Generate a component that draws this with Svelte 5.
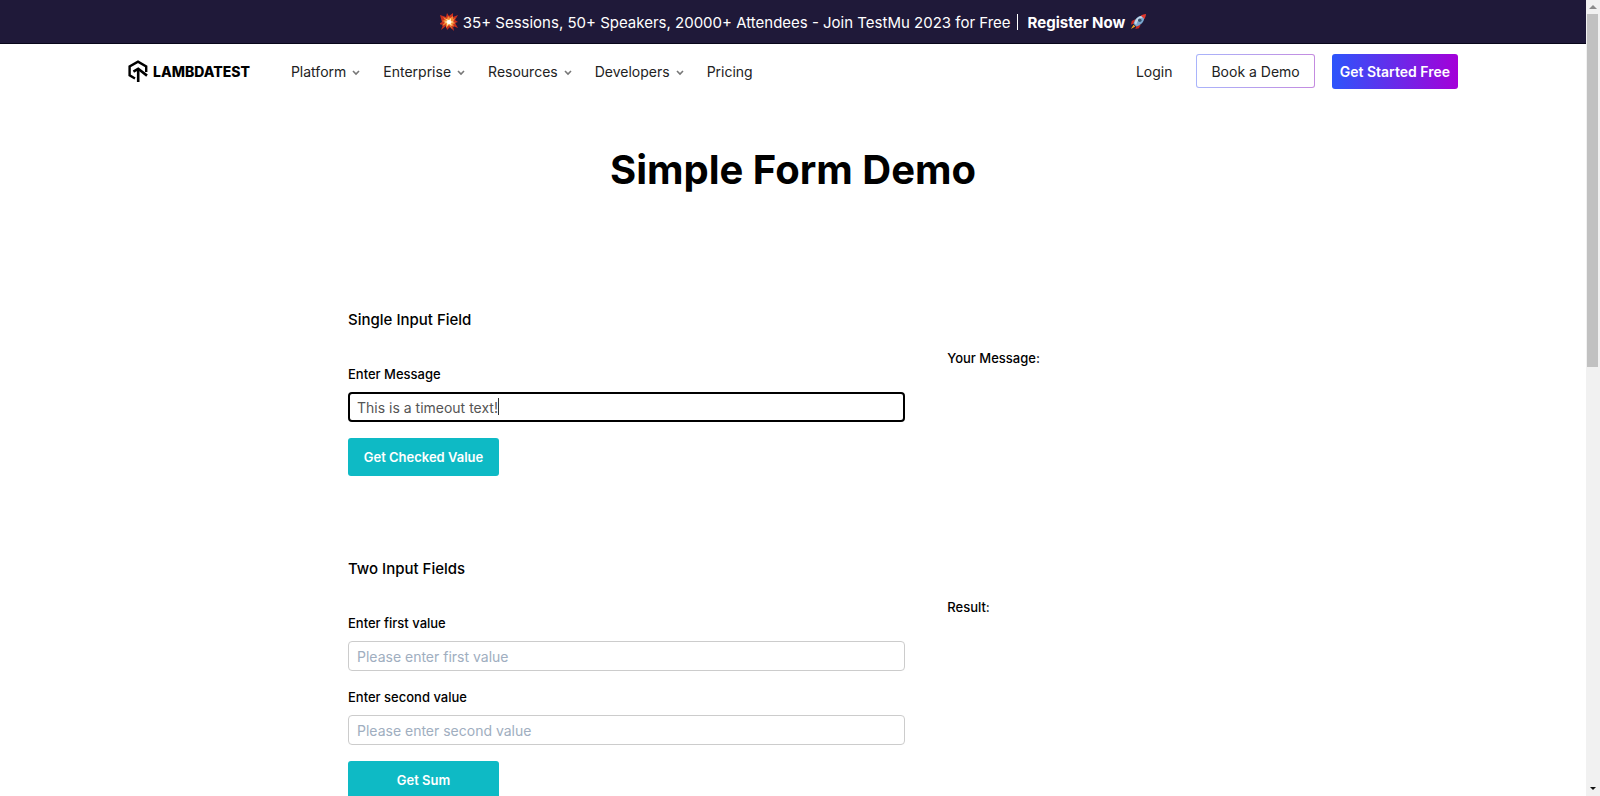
<script>
	const links = [
		{ name: 'Platform', menu: true },
		{ name: 'Enterprise', menu: true },
		{ name: 'Resources', menu: true },
		{ name: 'Developers', menu: true },
		{ name: 'Pricing', menu: false }
	];

	let message = $state('This is a timeout text!');
	let shown = $state('');
	let first = $state('');
	let second = $state('');
	let sum = $state('');

	const showMessage = (e) => {
		e.preventDefault();
		shown = message;
	};
	const getSum = (e) => {
		e.preventDefault();
		sum = Number(first) + Number(second);
	};
</script>

<div class="window">
	<div class="page">
		<a class="banner" href="#register">
			<svg class="emoji" viewBox="0 0 18 18" aria-hidden="true">
				<path fill="#c9301f" d="M0 2l6 2 1-4 2 3 4-3v4l5-2-3 5 3 2-3 1 3 5-5-2 1 5-4-4-3 3-1-4-5 4 2-5-4-1 3-2z" />
				<path fill="#f58a35" d="M3 4l4 2 1-3 2 2 3-2v3l2-1-2 4 3 1-3 1 1 3-3-2 1 4-3-4-3 3v-4l-4 2 3-4-3-1 3-1z" />
				<path fill="#ffe9a3" d="M6 6l3 1 2-2v3l3 1-3 1 1 3-3-2-2 2v-3l-3-1 3-1z" />
				<circle cx="9" cy="9" r="2" fill="#fff" />
			</svg>
			<span>35+ Sessions, 50+ Speakers, 20000+ Attendees - Join TestMu 2023 for Free</span>
			<span class="bar"></span>
			<b>Register Now</b>
			<svg class="emoji rocket" viewBox="0 0 18 18" aria-hidden="true">
				<path fill="#c9261f" d="M6 6L2 8 1 12l5-2zM12 12l-2 4-4 1 2-5z" />
				<path fill="#f6a623" d="M4 12l-3 5 5-3z" />
				<path fill="#7aa7cf" d="M4 11C5 6 9 2 14 2l2 2c0 5-4 9-9 10z" />
				<path fill="#c3d7e8" d="M5 10C6 6 9 3 13 2l1 2c-3 1-6 4-7 8z" />
				<path fill="#e2372b" d="M12 2c2-1 4-2 6-2 0 2-1 4-2 6-1-2-2-3-4-4z" />
				<circle cx="11" cy="7" r="2" fill="#31506f" />
			</svg>
		</a>

		<header>
			<a class="logo" href="#home">
				<svg class="mark" viewBox="0 0 20 22" fill="none" stroke="#000" aria-hidden="true">
					<path stroke-width="2.4" d="M7 18.5L1.6 15.3V6.4L10 1.6l8.2 4.8V12" />
					<path stroke-width="2.6" d="M5.4 11.6l4.8-2.8 8.8 6.8" />
					<path stroke-width="2.6" d="M10.2 9.5V22" />
				</svg>
				<span>LAMBDATEST</span>
			</a>
			<nav>
				{#each links as link}
					<a href="#{link.name}">
						{link.name}
						{#if link.menu}
							<svg class="chevron" viewBox="0 0 8 6" fill="none" stroke="#777" stroke-width="1.6" aria-hidden="true">
								<path d="M1 1l3 3 3-3" />
							</svg>
						{/if}
					</a>
				{/each}
			</nav>
			<div class="actions">
				<a href="#login">Login</a>
				<button class="demo">Book a Demo</button>
				<button class="start">Get Started Free</button>
			</div>
		</header>

		<main>
			<h1>Simple Form Demo</h1>

			<section>
				<form onsubmit={showMessage}>
					<h2>Single Input Field</h2>
					<label for="user-message">Enter Message</label>
					<div class="field typing">
						<input id="user-message" type="text" placeholder="Please enter your Message" bind:value={message} />
					</div>
					<button class="submit">Get Checked Value</button>
				</form>
				<div class="result">
					<p>Your Message:</p>
					<p>{shown}</p>
				</div>
			</section>

			<section>
				<form onsubmit={getSum}>
					<h2>Two Input Fields</h2>
					<label for="sum1">Enter first value</label>
					<div class="field">
						<input id="sum1" type="text" placeholder="Please enter first value" bind:value={first} />
					</div>
					<label for="sum2">Enter second value</label>
					<div class="field">
						<input id="sum2" type="text" placeholder="Please enter second value" bind:value={second} />
					</div>
					<button class="submit">Get Sum</button>
				</form>
				<div class="result">
					<p>Result:</p>
					<p>{sum}</p>
				</div>
			</section>
		</main>
	</div>

	<div class="scrollbar" aria-hidden="true">
		<svg viewBox="0 0 14 14"><path fill="#8b8b8b" d="M3 9l4-4 4 4z" /></svg>
		<div class="track"><div class="thumb"></div></div>
		<svg viewBox="0 0 14 14"><path fill="#111" d="M4 5h6L7 8z" /></svg>
	</div>
</div>

<style>
	:global(body) {
		margin: 0;
	}
	.window {
		display: flex;
		height: 100vh;
		overflow: hidden;
		background: #fff;
		color: #000;
		font-family: Inter, 'Liberation Sans', sans-serif;
		font-size: 14px;
	}
	.page {
		flex: 1;
		min-width: 0;
		overflow: hidden;
	}
	a {
		color: inherit;
		text-decoration: none;
	}
	h1,
	h2,
	p {
		margin: 0;
	}
	button,
	input {
		font: inherit;
		box-sizing: border-box;
	}
	button {
		cursor: pointer;
	}

	.banner {
		display: flex;
		align-items: center;
		justify-content: center;
		height: 44px;
		background: #1f1939;
		box-shadow: inset 0 -1px #08061a;
		color: #fff;
		font-size: 15px;
	}
	.emoji {
		width: 18px;
		height: 18px;
		margin-right: 5px;
	}
	.rocket {
		width: 16px;
		height: 16px;
		margin: 0 0 0 5px;
	}
	.bar {
		width: 1px;
		height: 16px;
		margin: 0 10px 0 6px;
		background: #fff;
	}

	header {
		display: flex;
		align-items: center;
		max-width: 1330px;
		height: 54px;
		margin: 0 auto;
		color: #222;
	}
	.logo {
		display: flex;
		align-items: center;
		gap: 5px;
		margin-right: 41px;
		color: #000;
		font-weight: 800;
	}
	.mark {
		width: 20px;
		height: 22px;
	}
	nav {
		display: flex;
		gap: 23px;
	}
	nav a {
		display: flex;
		align-items: center;
		gap: 6px;
	}
	.chevron {
		width: 8px;
		height: 6px;
		margin-top: 3px;
	}
	.actions {
		display: flex;
		align-items: center;
		margin-left: auto;
	}
	.demo {
		height: 34px;
		margin: 0 17px 0 24px;
		padding: 0 14px;
		border: 1px solid transparent;
		border-radius: 3px;
		background:
			linear-gradient(#fff, #fff) padding-box,
			linear-gradient(90deg, #a9b4fb, #c48be0) border-box;
		color: #222;
	}
	.start {
		height: 35px;
		padding: 0 8px;
		border: 0;
		border-radius: 3px;
		background: linear-gradient(90deg, #2c55fb, #a400d8);
		color: #fff;
		font-weight: 600;
	}

	h1 {
		padding: 46px 0 98px;
		font-size: 40px;
		font-weight: 700;
		line-height: 52px;
		text-align: center;
	}
	section {
		display: grid;
		grid-template-columns: 23fr 12fr;
		gap: 42px;
		max-width: 890px;
		margin: 0 auto 67px;
		padding-top: 14px;
	}
	h2 {
		margin-bottom: 32px;
		font-size: 15px;
		font-weight: 500;
		line-height: 24px;
	}
	label {
		display: block;
		margin-bottom: 8px;
		font-size: 13px;
		font-weight: 500;
		line-height: 20px;
	}
	.field {
		position: relative;
		margin-bottom: 16px;
	}
	input {
		display: block;
		width: 100%;
		height: 30px;
		padding: 0 8px;
		border: 1px solid #ccc;
		border-radius: 4px;
		outline: 0;
		color: #555;
	}
	input::placeholder {
		color: #a0aec0;
		opacity: 1;
	}
	.typing input {
		border: 2px solid #000;
		padding: 0 7px;
	}
	/* text cursor */
	.typing::after {
		content: '';
		position: absolute;
		top: 6px;
		left: 150px;
		width: 1px;
		height: 17px;
		background: #333;
	}
	.submit {
		width: 151px;
		height: 38px;
		border: 0;
		border-radius: 3px;
		background: #0ebac5;
		color: #fff;
		font-size: 13px;
		font-weight: 600;
	}
	.result {
		padding-top: 40px;
		font-size: 13px;
		font-weight: 500;
		line-height: 20px;
	}

	.scrollbar {
		display: flex;
		flex-direction: column;
		width: 14px;
		background: #f1f1f1;
	}
	.scrollbar svg {
		width: 14px;
		height: 14px;
	}
	.track {
		flex: 1;
		padding: 0 2px 0 1px;
	}
	.thumb {
		height: 46%;
		background: #c1c1c1;
	}
</style>
